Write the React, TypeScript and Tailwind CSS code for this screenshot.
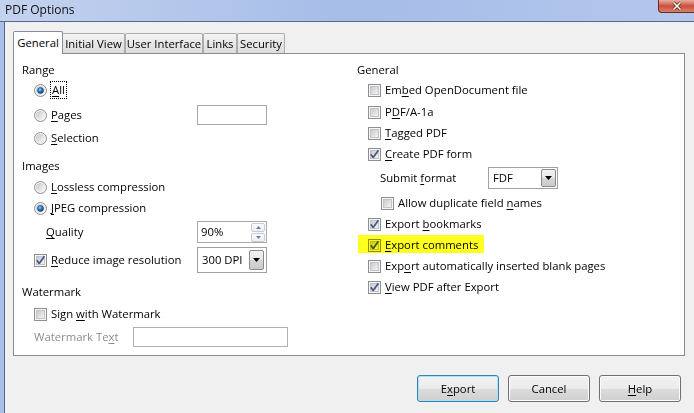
import React from "react";

const M = ({ t, i }: { t: string; i: number }) =>
  i < 0 ? (
    <>{t}</>
  ) : (
    <>
      {t.slice(0, i)}
      <span className="underline decoration-1 underline-offset-[2px]">{t[i]}</span>
      {t.slice(i + 1)}
    </>
  );

function Radio({ checked }: { checked?: boolean }) {
  return (
    <svg width="13" height="13" viewBox="0 0 13 13" className="shrink-0">
      <defs>
        <linearGradient id="radioBg" x1="0" y1="0" x2="1" y2="1">
          <stop offset="0" stopColor="#c4c4c4" />
          <stop offset="1" stopColor="#fdfdfd" />
        </linearGradient>
        <radialGradient id="radioDot" cx="0.4" cy="0.35" r="0.75">
          <stop offset="0" stopColor="#9ad6ff" />
          <stop offset="0.45" stopColor="#1f78c6" />
          <stop offset="1" stopColor="#0c3766" />
        </radialGradient>
      </defs>
      <circle cx="6.5" cy="6.5" r="6" fill="#f4f4f4" stroke="#8e8f8f" />
      <circle cx="6.5" cy="6.5" r="4.6" fill="url(#radioBg)" />
      {checked && <circle cx="6.5" cy="6.5" r="3" fill="url(#radioDot)" stroke="#1d3f66" strokeWidth="0.6" />}
    </svg>
  );
}

function Check({ checked }: { checked?: boolean }) {
  return (
    <svg width="13" height="13" viewBox="0 0 13 13" className="shrink-0">
      <defs>
        <linearGradient id="cbIn" x1="0" y1="0" x2="1" y2="1">
          <stop offset="0" stopColor="#c3c7cd" />
          <stop offset="1" stopColor="#f6f6f6" />
        </linearGradient>
      </defs>
      <rect x="0.5" y="0.5" width="12" height="12" fill="#f6f6f6" stroke="#8e8f8f" />
      <rect x="2.5" y="2.5" width="8" height="8" fill="url(#cbIn)" stroke="#c2c4c8" />
      {checked && (
        <path d="M2.8 6.3 L5.2 9.4 L10.4 2.2" fill="none" stroke="#45568a" strokeWidth="1.7" strokeLinejoin="round" />
      )}
    </svg>
  );
}

function DropBtn() {
  return (
    <div className="w-[15px] border border-[#8a8a8a] rounded-[2px] bg-[linear-gradient(#f2f2f2,#e6e6e6_50%,#d6d6d6_50%,#cacaca)] flex items-center justify-center">
      <svg width="7" height="4" viewBox="0 0 7 4">
        <path d="M0 0 L7 0 L3.5 4 Z" fill="#000" />
      </svg>
    </div>
  );
}

export default function App() {
  return (
    <div className="w-[694px] h-[413px] overflow-hidden bg-[#f0f0f0] flex flex-col font-['Open_Sans',sans-serif] text-[11.3px] leading-[14px] text-black">
      {/* title bar */}
      <div className="h-[22px] shrink-0 flex justify-between border-b border-[#566a8e] bg-linear-to-r from-[#c3d2ee] via-[#a6bde8] to-[#b4c7ec]">
        <div className="pl-[5px] pt-[3px] text-[12px] text-[#111]">PDF Options</div>
        <div className="w-[36px] h-[13px] rounded-bl-[4px] border-l border-b border-[#6b2a22] bg-linear-to-b from-[#e9ad9f] via-[#c94f3d] to-[#d9806b] flex items-center justify-center">
          <svg width="12" height="10" viewBox="0 0 12 10">
            <path d="M2.5 1.5 L9.5 8.5 M9.5 1.5 L2.5 8.5" stroke="#5a1e16" strokeWidth="3" />
            <path d="M2.5 1.5 L9.5 8.5 M9.5 1.5 L2.5 8.5" stroke="#ffffff" strokeWidth="1.6" />
          </svg>
        </div>
      </div>

      <div className="flex flex-1 min-h-0">
        <div className="w-[4px] bg-[#a9c0ea]" />
        <div className="w-px bg-[#55688a]" />
        <div className="flex flex-col pl-[8px]">
          {/* tabs */}
          <div className="mt-[9px] flex items-end">
            <div className="relative z-10 w-[50px] h-[23px] mb-[-1px] border border-b-0 border-[#898c95] rounded-t-[2px] bg-white flex items-center justify-center">
              General
            </div>
            <div className="ml-[-1px] w-[63px] h-[20px] border border-b-0 border-[#acacac] rounded-t-[2px] bg-linear-to-b from-[#f3f3f3] to-[#dcdcdc] flex items-center justify-center">
              Initial View
            </div>
            <div className="w-[78px] h-[20px] border border-b-0 border-[#acacac] rounded-t-[2px] bg-linear-to-b from-[#f3f3f3] to-[#dcdcdc] flex items-center justify-center">
              User Interface
            </div>
            <div className="w-[34px] h-[20px] border border-b-0 border-[#acacac] rounded-t-[2px] bg-linear-to-b from-[#f3f3f3] to-[#dcdcdc] flex items-center justify-center">
              Links
            </div>
            <div className="w-[48px] h-[20px] border border-b-0 border-[#acacac] rounded-t-[2px] bg-linear-to-b from-[#f3f3f3] to-[#dcdcdc] flex items-center justify-center">
              Security
            </div>
          </div>

          {/* panel */}
          <div className="w-[672px] h-[303px] border border-[#898c95] bg-white flex">
            {/* left column */}
            <div className="w-[335px] pl-[8px] pt-[7px] flex flex-col">
              <div className="h-[18px] flex items-center">Range</div>
              <div className="h-[18px] mt-[2px] flex items-center pl-[12px] gap-[4px]">
                <Radio checked />
                <span className="outline outline-1 outline-dotted outline-black px-[1px] py-[1px]">
                  <M t="All" i={0} />
                </span>
              </div>
              <div className="h-[18px] mt-[7px] flex items-center">
                <div className="w-[175px] flex items-center pl-[12px] gap-[4px]">
                  <Radio />
                  <span><M t="Pages" i={0} /></span>
                </div>
                <div className="w-[70px] h-[20px] border border-[#a9a9a9] bg-white" />
              </div>
              <div className="h-[18px] mt-[5px] flex items-center pl-[12px] gap-[4px]">
                <Radio />
                <span><M t="Selection" i={0} /></span>
              </div>

              <div className="h-[18px] mt-[10px] flex items-center">Images</div>
              <div className="h-[18px] mt-[3px] flex items-center pl-[12px] gap-[4px]">
                <Radio />
                <span><M t="Lossless compression" i={0} /></span>
              </div>
              <div className="h-[18px] mt-[3px] flex items-center pl-[12px] gap-[4px]">
                <Radio checked />
                <span><M t="JPEG compression" i={0} /></span>
              </div>
              <div className="h-[18px] mt-[6px] flex items-center">
                <div className="w-[175px] pl-[24px]"><M t="Quality" i={0} /></div>
                <div className="w-[70px] h-[22px] border border-[#a9a9a9] bg-white flex items-center justify-between">
                  <span className="pl-[3px]">90%</span>
                  <div className="flex flex-col gap-px mr-[1px]">
                    <div className="w-[14px] h-[9px] border border-[#c5ccd6] rounded-[2px] bg-linear-to-b from-[#fbfbfb] to-[#eceff3] flex items-center justify-center">
                      <svg width="5" height="3" viewBox="0 0 5 3"><path d="M0 3 L5 3 L2.5 0 Z" fill="#6a7fa3" /></svg>
                    </div>
                    <div className="w-[14px] h-[9px] border border-[#c5ccd6] rounded-[2px] bg-linear-to-b from-[#fbfbfb] to-[#eceff3] flex items-center justify-center">
                      <svg width="5" height="3" viewBox="0 0 5 3"><path d="M0 0 L5 0 L2.5 3 Z" fill="#6a7fa3" /></svg>
                    </div>
                  </div>
                </div>
              </div>
              <div className="h-[18px] mt-[10px] flex items-center">
                <div className="w-[175px] flex items-center pl-[12px] gap-[4px]">
                  <Check checked />
                  <span><M t="Reduce image resolution" i={0} /></span>
                </div>
                <div className="w-[70px] h-[26px] border border-[#a0a0a0] bg-white flex items-stretch justify-between p-[2px]">
                  <span className="pl-[2px] self-center">300 DPI</span>
                  <DropBtn />
                </div>
              </div>

              <div className="h-[18px] mt-[14px] flex items-center">Watermark</div>
              <div className="h-[18px] mt-[4px] flex items-center pl-[12px] gap-[4px]">
                <Check />
                <span><M t="Sign with Watermark" i={5} /></span>
              </div>
              <div className="h-[18px] mt-[5px] flex items-center">
                <div className="w-[111px] pl-[12px] text-[#8d8d8d]"><M t="Watermark Text" i={12} /></div>
                <div className="w-[155px] h-[20px] border border-[#b0b0b0] bg-white" />
              </div>
            </div>

            {/* right column */}
            <div className="flex-1 pl-[8px] pt-[7px] flex flex-col">
              <div className="h-[18px] flex items-center">General</div>
              <div className="h-[18px] mt-[2px] flex items-center pl-[11px] gap-[4px]">
                <Check />
                <span><M t="Embed OpenDocument file" i={2} /></span>
              </div>
              <div className="h-[18px] mt-[4px] flex items-center pl-[11px] gap-[4px]">
                <Check />
                <span><M t="PDF/A-1a" i={1} /></span>
              </div>
              <div className="h-[18px] mt-[3px] flex items-center pl-[11px] gap-[4px]">
                <Check />
                <span><M t="Tagged PDF" i={0} /></span>
              </div>
              <div className="h-[18px] mt-[3px] flex items-center pl-[11px] gap-[4px]">
                <Check checked />
                <span><M t="Create PDF form" i={0} /></span>
              </div>
              <div className="h-[18px] mt-[6px] flex items-center">
                <div className="w-[131px] pl-[23px]"><M t="Submit format" i={7} /></div>
                <div className="w-[70px] h-[22px] border border-[#a0a0a0] bg-white flex items-stretch justify-between p-[1px]">
                  <span className="pl-[3px] self-center">FDF</span>
                  <DropBtn />
                </div>
              </div>
              <div className="h-[18px] mt-[7px] flex items-center pl-[24px] gap-[4px]">
                <Check />
                <span><M t="Allow duplicate field names" i={22} /></span>
              </div>
              <div className="h-[18px] mt-[3px] flex items-center pl-[11px] gap-[4px]">
                <Check checked />
                <span><M t="Export bookmarks" i={7} /></span>
              </div>
              <div className="relative h-[18px] mt-[3px] flex items-center pl-[11px] gap-[4px]">
                <Check checked />
                <span><M t="Export comments" i={0} /></span>
                <div className="absolute left-[1px] top-[-1px] w-[126px] h-[18px] bg-[#ffff20] mix-blend-multiply" />
              </div>
              <div className="h-[18px] mt-[3px] flex items-center pl-[11px] gap-[4px]">
                <Check />
                <span><M t="Export automatically inserted blank pages" i={3} /></span>
              </div>
              <div className="h-[18px] mt-[3px] flex items-center pl-[11px] gap-[4px]">
                <Check checked />
                <span><M t="View PDF after Export" i={0} /></span>
              </div>
            </div>
          </div>

          {/* buttons */}
          <div className="w-[672px] mt-[19px] pr-[4px] flex justify-end gap-[9px]">
            <button className="w-[82px] h-[27px] rounded-[3px] border border-[#3c7fb1] shadow-[inset_0_0_0_1px_#a6e2f8] bg-[linear-gradient(#f2f2f2,#ebebeb_50%,#dddddd_50%,#cfcfcf)] flex items-center justify-center">
              <M t="Export" i={1} />
            </button>
            <button className="w-[82px] h-[27px] rounded-[3px] border border-[#707070] shadow-[inset_0_0_0_1px_#fcfcfc] bg-[linear-gradient(#f2f2f2,#ebebeb_50%,#dddddd_50%,#cfcfcf)] flex items-center justify-center">
              Cancel
            </button>
            <button className="w-[82px] h-[27px] rounded-[3px] border border-[#707070] shadow-[inset_0_0_0_1px_#fcfcfc] bg-[linear-gradient(#f2f2f2,#ebebeb_50%,#dddddd_50%,#cfcfcf)] flex items-center justify-center">
              <M t="Help" i={0} />
            </button>
          </div>
        </div>
      </div>
    </div>
  );
}
